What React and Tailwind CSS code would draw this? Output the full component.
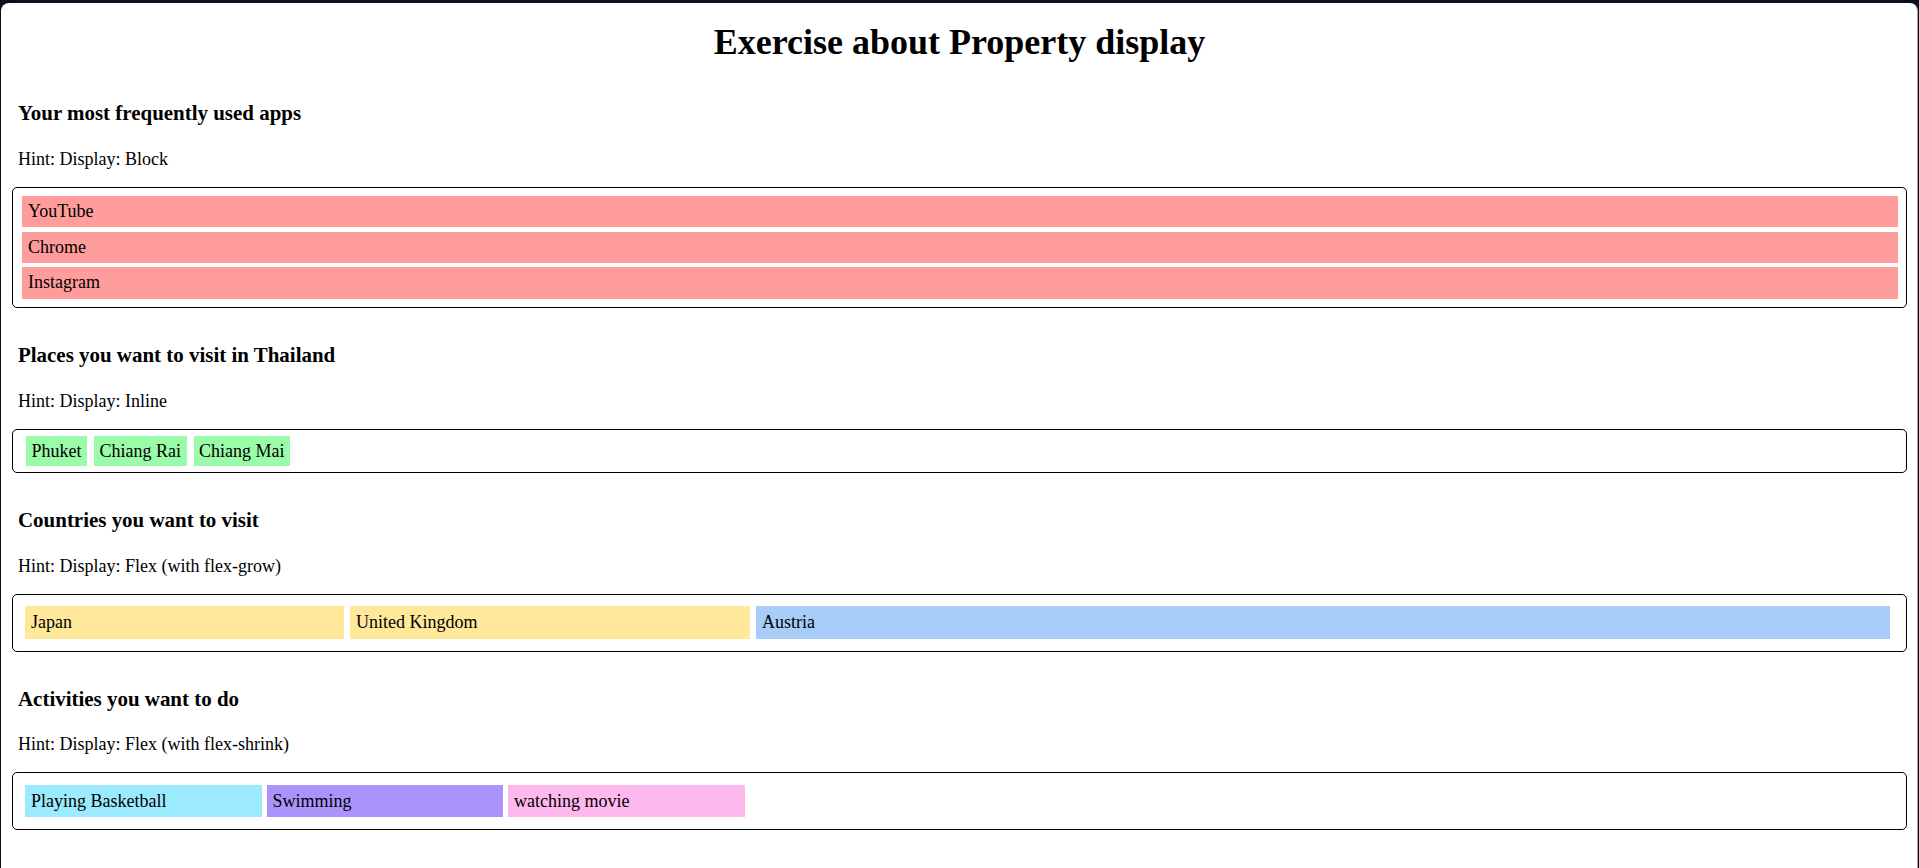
import React from 'react';

// --- Data ---
const apps = ["YouTube", "Chrome", "Instagram"];
const places = ["Phuket", "Chiang Rai", "Chiang Mai"];
const countries = [
  { name: "Japan", className: "w-[319px] bg-[#ffe899]" },
  { name: "United Kingdom", className: "w-[400px] bg-[#ffe899]" },
  { name: "Austria", className: "flex-1 bg-[#a8cdf9]" },
];
const activities = [
  { name: "Playing Basketball", className: "bg-[#9ceafd]" },
  { name: "Swimming", className: "bg-[#aa94fc]" },
  { name: "watching movie", className: "bg-[#fdb8ee]" },
];

// --- Sub-component: Section ---
const Section = ({ title, hint, first, boxClass, children }) => (
  <section className={first ? "mt-[39.5px]" : "mt-[35px]"}>
    <h3 className="pl-[6px] text-[20.95px] font-bold leading-[24px]">{title}</h3>
    <p className="mt-[23.5px] pl-[6px] text-[18px] leading-[20px]">{hint}</p>
    <div className={`mt-[18px] rounded-[5px] border border-black ${boxClass}`}>
      {children}
    </div>
  </section>
);

const App = () => {
  return (
    <div className="min-h-screen bg-[#0b0f1c] px-[1px] pt-[3px] font-['Liberation_Serif',serif] text-black">
      <div className="min-h-[865px] rounded-t-[8px] border-r border-[#9aa0aa] bg-white pl-[11px] pr-[10px]">
        <h1 className="pt-[18.5px] text-center text-[36px] font-bold leading-[40px]">
          Exercise about Property display
        </h1>

        {/* Display: block */}
        <Section
          first
          title="Your most frequently used apps"
          hint="Hint: Display: Block"
          boxClass="flex flex-col gap-[4.4px] pl-[9px] pr-[8px] py-[8.8px]"
        >
          {apps.map((app) => (
            <div key={app} className="h-[31.2px] bg-[#ff9c9c] pl-[6px] text-[18px] leading-[31.2px]">
              {app}
            </div>
          ))}
        </Section>

        {/* Display: inline */}
        <Section
          title="Places you want to visit in Thailand"
          hint="Hint: Display: Inline"
          boxClass="flex gap-[7px] pl-[13px] py-[6px]"
        >
          {places.map((place) => (
            <span key={place} className="h-[30.5px] bg-[#9afca8] px-[5.5px] text-[18px] leading-[30.5px]">
              {place}
            </span>
          ))}
        </Section>

        {/* Display: flex (grow) */}
        <Section
          title="Countries you want to visit"
          hint="Hint: Display: Flex (with flex-grow)"
          boxClass="flex gap-[6px] pl-[12px] pr-[16px] py-[11.5px]"
        >
          {countries.map((c) => (
            <div key={c.name} className={`h-[32.7px] px-[6px] text-[18px] leading-[32.7px] ${c.className}`}>
              {c.name}
            </div>
          ))}
        </Section>

        {/* Display: flex (shrink) */}
        <Section
          title="Activities you want to do"
          hint="Hint: Display: Flex (with flex-shrink)"
          boxClass="flex gap-[5px] pl-[12px] py-[11.5px]"
        >
          {activities.map((a) => (
            <div key={a.name} className={`h-[32.7px] w-[236.5px] shrink px-[6px] text-[18px] leading-[32.7px] ${a.className}`}>
              {a.name}
            </div>
          ))}
        </Section>
      </div>
    </div>
  );
};

export default App;
